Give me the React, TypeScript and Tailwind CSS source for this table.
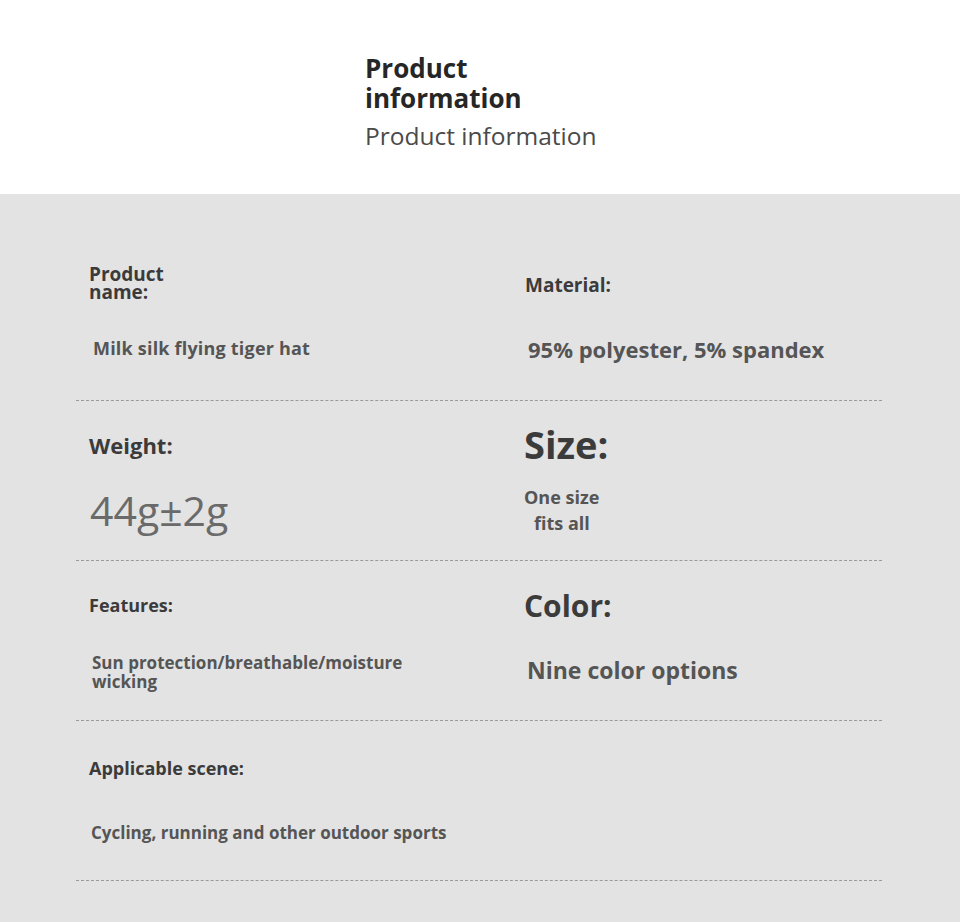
export default function App() {
  const font = { fontFamily: '"Open Sans", "Noto Sans", sans-serif' }
  return (
    <div className="w-[960px] h-[922px] bg-[#e3e3e3]" style={font}>
      <header className="h-[194px] bg-white pl-[365px] pt-[53px]">
        <h1 className="text-[26px] leading-[30px] font-bold text-[#262626]">
          Product
          <br />
          information
        </h1>
        <p className="mt-[7px] text-[24.5px] leading-[32px] text-[#4a4a4a]">Product information</p>
      </header>

      <main className="mx-[76px] w-[806px] pt-[47px]">
        {/* row 1 */}
        <div className="grid h-[160px] grid-cols-[448px_1fr] border-b border-dashed border-[#9a9a9a]">
          <div className="flex flex-col pt-[24px] pl-[13px]">
            <div className="text-[19px] leading-[18px] font-bold text-[#3b3b3b]">
              Product
              <br />
              name:
            </div>
            <div className="mt-[35px] pl-[4px] text-[18px] leading-[24px] font-bold tracking-[0.2px] text-[#555]">
              Milk silk flying tiger hat
            </div>
          </div>
          <div className="flex flex-col pt-[32px]">
            <div className="pl-[1px] text-[19px] leading-[24px] font-bold text-[#3b3b3b]">Material:</div>
            <div className="mt-[38px] pl-[4px] text-[22px] leading-[28px] font-bold text-[#555]">
              95% polyester, 5% spandex
            </div>
          </div>
        </div>

        {/* row 2 */}
        <div className="grid h-[160px] grid-cols-[448px_1fr] border-b border-dashed border-[#9a9a9a]">
          <div className="flex flex-col pt-[30px] pl-[13px]">
            <div className="text-[22px] leading-[28px] font-bold text-[#3b3b3b]">Weight:</div>
            <div className="mt-[28px] pl-[1px] text-[41px] leading-[46px] text-[#6a6a6a]">44g±2g</div>
          </div>
          <div className="flex flex-col pt-[21px]">
            <div className="text-[38px] leading-[44px] font-bold text-[#3b3b3b]">Size:</div>
            <div className="mt-[18px] text-[18px] leading-[26px] font-bold text-[#555]">
              One size
              <br />
              <span className="pl-[10px]">fits all</span>
            </div>
          </div>
        </div>

        {/* row 3 */}
        <div className="grid h-[160px] grid-cols-[448px_1fr] border-b border-dashed border-[#9a9a9a]">
          <div className="flex flex-col pt-[32px] pl-[13px]">
            <div className="text-[18px] leading-[24px] font-bold text-[#3b3b3b]">Features:</div>
            <div className="mt-[36px] w-[330px] pl-[3px] text-[17px] leading-[19px] font-bold text-[#555]">
              Sun protection/breathable/moisture wicking
            </div>
          </div>
          <div className="flex flex-col pt-[27px]">
            <div className="text-[30px] leading-[36px] font-bold text-[#3b3b3b]">Color:</div>
            <div className="mt-[31px] pl-[3px] text-[23px] leading-[30px] font-bold text-[#555]">Nine color options</div>
          </div>
        </div>

        {/* row 4 */}
        <div className="flex h-[160px] flex-col border-b border-dashed border-[#9a9a9a] pt-[35px] pl-[13px]">
          <div className="text-[18px] leading-[24px] font-bold text-[#3b3b3b]">Applicable scene:</div>
          <div className="mt-[41px] pl-[2px] text-[17px] leading-[24px] font-bold text-[#555]">
            Cycling, running and other outdoor sports
          </div>
        </div>
      </main>
    </div>
  )
}
